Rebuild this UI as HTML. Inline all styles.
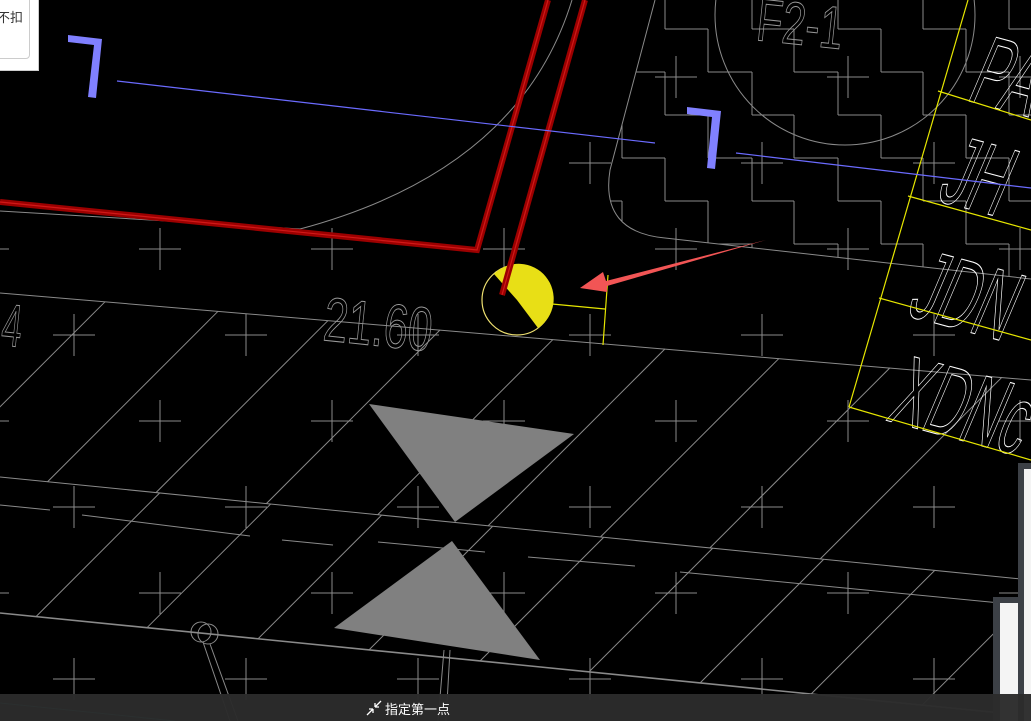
<!DOCTYPE html>
<html><head><meta charset="utf-8">
<style>
html,body{margin:0;padding:0;background:#000;overflow:hidden;width:1031px;height:721px;font-family:"Liberation Sans","Noto Sans CJK SC",sans-serif}
svg{position:absolute;left:0;top:0}
.bar{position:absolute;left:0;top:694px;width:1031px;height:27px;background:rgba(43,43,43,0.97)}
.bar span{position:absolute;left:385px;top:5px;color:#fff;font-size:13px}
.dlg{position:absolute;left:0;top:0;width:38px;height:70px;background:#fff;border-right:1px solid #ccc;border-bottom:1px solid #ccc}
.dlg .in{position:absolute;left:-5px;top:-5px;width:33px;height:62px;border:1px solid #ccc;border-radius:4px}
.dlg span{position:absolute;left:-3px;top:7px;font-size:13px;color:#333}
.p1{position:absolute;left:1018px;top:463px;width:13px;height:258px;background:#3c4046}
.p1 .w{position:absolute;left:6px;top:6px;width:7px;height:252px;background:#f4f4f4}
.p2{position:absolute;left:993px;top:597px;width:25px;height:124px;background:#3c4046}
.p2 .w{position:absolute;left:7px;top:6px;width:18px;height:118px;background:#f4f4f4}
</style></head><body>
<svg id="s" width="1031" height="721" viewBox="0 0 1031 721">
<defs><clipPath id="cp"><path d="M655,0 L1031,0 L1031,279 L665,238 Q600,232 610,170 Z"/></clipPath></defs>
<g id="stairs" clip-path="url(#cp)" stroke="#8a8a8a" stroke-width="1" fill="none"></g>
<g id="grid" stroke="#8a8a8a" stroke-width="1" fill="none"></g>
<g stroke="#8a8a8a" stroke-width="1" fill="none">
<path d="M655,0 L610,170 Q600,232 665,238 L1031,279"/>
<circle cx="845" cy="15" r="130"/>
<path d="M572,0 Q520,170 300,229 L0,211"/>
<path d="M0,293 L1031,380"/>
<path d="M0,477 L1031,580"/>
<path d="M0,613 L1031,716" stroke-width="1.6"/>
<path d="M0,505 L50,510 M82,515 L250,536 M282,540 L333,545 M378,542 L485,552 M528,557 L635,566 M680,572 L1031,606"/>
<circle cx="201" cy="632" r="10"/><circle cx="208" cy="634" r="10"/>
<path d="M203,642 L230,721 M210,644 L238,721 M444,650 L438,721 M450,650 L446,721"/>
</g>
<g id="diag" stroke="#8a8a8a" stroke-width="1" fill="none"></g>
<g fill="none" stroke="#999" stroke-width="1" font-family="Liberation Sans,sans-serif">
<text transform="translate(322,340) rotate(6) scale(0.7,1)" font-size="62">21.60</text>
<text transform="translate(0,345) rotate(6) scale(0.6,1)" font-size="60">4</text>
<text transform="translate(755,40) rotate(6) scale(0.7,1)" font-size="60">F2-1</text>
</g>
<g fill="none" stroke="#fff" stroke-width="1" font-family="Liberation Sans,sans-serif">
<text transform="translate(965,100) rotate(15) skewX(-8) scale(0.55,1.05)" font-size="95">PA</text>
<text transform="translate(935,200) rotate(15) skewX(-8) scale(0.55,1.05)" font-size="95">JH</text>
<text transform="translate(905,315) rotate(15) skewX(-8) scale(0.55,1.05)" font-size="95">JDN</text>
<text transform="translate(885,420) rotate(15) skewX(-8) scale(0.55,1.05)" font-size="95">XDNc</text>
</g>
<g stroke="#e6e600" stroke-width="1.2" fill="none">
<path d="M968,0 L849,407"/>
<path d="M938,91 L1031,120 M908,196 L1031,230 M879,298 L1031,340 M849,407 L1031,460"/>
<path d="M552,304 L605,309 M608,275 L603,345"/>
<circle cx="517" cy="300" r="35" stroke="#eee070"/>
</g>
<path d="M517,300 L494,274 A35,35 0 1 1 538,328 Z" fill="#e8df16"/>
<polygon points="369,404 574,434 455,522" fill="#808080"/>
<polygon points="452,541 334,628 540,660" fill="#808080"/>
<g stroke-linecap="butt" fill="none">
<path d="M0,202 L477,250 L548,0" stroke="#9c0000" stroke-width="6"/>
<path d="M502,295 L585,0" stroke="#9c0000" stroke-width="6"/>
<path d="M0,202 L477,250 L548,0 M502,295 L585,0" stroke="#d01818" stroke-width="1.2"/>
</g>
<polygon points="766,240 606,281 603,272 580,288 607,292 607,286" fill="#f25555"/>
<g stroke="#6b6bff" stroke-width="1.2"><path d="M117,81 L655,143 M736,153 L1031,188"/></g>
<polygon points="68,35 102,39 96,98 88,97 94,45 68,42" fill="#8080ff"/>
<polygon points="687,107 721,111 715,169 707,168 712,117 687,114" fill="#8080ff"/>
<path d="M0,703 L175,721" stroke="#2aa0a0" stroke-width="1"/>
</svg>
<div class="dlg"><div class="in"></div><span>不扣</span></div>
<div class="p1"><div class="w"></div></div>
<div class="p2"><div class="w"></div></div>
<div class="bar">
<svg width="20" height="20" style="left:364px;top:4px"><path d="M3,17 L9,11 M9,11 L5,11 M9,11 L9,15 M17,3 L11,9 M11,9 L15,9 M11,9 L11,5" stroke="#fff" stroke-width="1.3" fill="none"/></svg>
<span>指定第一点</span></div>
<script>
var NS="http://www.w3.org/2000/svg";
function ln(g,x1,y1,x2,y2){var l=document.createElementNS(NS,"line");l.setAttribute("x1",x1);l.setAttribute("y1",y1);l.setAttribute("x2",x2);l.setAttribute("y2",y2);g.appendChild(l);}
var st=document.getElementById("stairs");
var L=[-14,29,72,115,158,201,244,287];
var X=[536,579,622,665,708,752,794,838,881,923,966,1009,1052];
for(var r=0;r<L.length-1;r++){for(var i=0;i<X.length-1;i++){if((i+r)%2==0){ln(st,X[i],L[r],X[i+1],L[r]);ln(st,X[i+1],L[r],X[i+1],L[r+1]);}}}
var g=document.getElementById("grid");
var A=[-12,160,332,504,676,848,1020],B=[74,246,418,590,762,934];
function cr(x,y){if(y<0)return;if(y<200&&x<560)return;ln(g,x-21,y,x+21,y);ln(g,x,y-21,x,y+21);}
[77,249,421,593].forEach(function(y){A.forEach(function(x){cr(x,y)})});
[-9,163,335,507,679].forEach(function(y){B.forEach(function(x){cr(x,y)})});
var d=document.getElementById("diag");
[105,218,328,440,553,665,779,890,1002].forEach(function(xt){var yt=293+0.084*xt;var x=(yt+xt-477)/1.1;ln(d,xt,yt,x,yt+(xt-x));});
[36,147,258,369,480,589,700,811,922,1031].forEach(function(xb){var yb=613+0.1*xb;var x=(yb+xb-477)/1.1;ln(d,xb,yb,x,yb-(x-xb));});
</script>
</body></html>
